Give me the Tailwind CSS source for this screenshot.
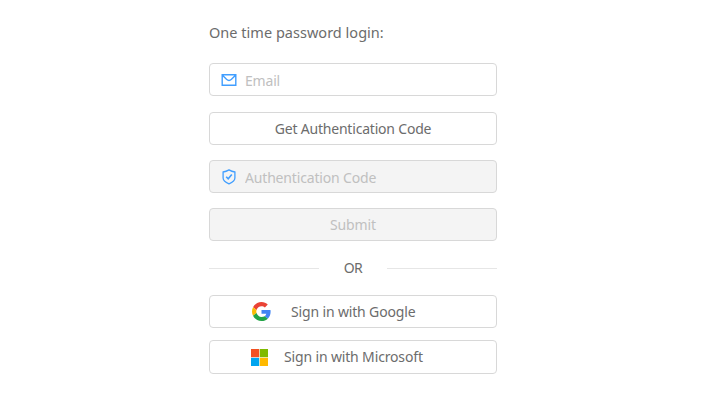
<!DOCTYPE html>
<html lang="en">
<head>
<meta charset="utf-8">
<title>Login</title>
<script src="https://cdn.jsdelivr.net/npm/@tailwindcss/browser@4"></script>
</head>
<body class="bg-white font-['Noto_Sans','Open_Sans',sans-serif] text-[14px] leading-5 text-[#6c6c6c]">
<main class="ml-[209px] flex w-[288px] flex-col pt-[22px]">
  <h1 class="h-5 whitespace-nowrap text-[14.5px] tracking-[0.02px]">One time password login:</h1>
  <label class="mt-[21px] flex h-[33px] items-center rounded-[4px] border border-[#d8d8d8] pl-[11px]">
    <svg class="mr-2 h-4 w-4 shrink-0" viewBox="0 0 16 16" fill="none" stroke="#409eff" stroke-width="1.4"><path d="M1.2 2.7h13.6v10.6H1.2zM1.2 2.9l4.3 4.4q2.5 2.2 5 0l4.3-4.4"/></svg>
    <input class="w-60 pt-0.5 tracking-[-0.2px] outline-none placeholder:text-[#c0c0c0]" type="email" placeholder="Email">
  </label>
  <button class="mt-4 h-[33px] rounded-[4px] border border-[#d8d8d8] tracking-[-0.2px]">Get Authentication Code</button>
  <label class="mt-[15px] flex h-[33px] items-center rounded-[4px] border border-[#d8d8d8] bg-[#f4f4f4] pl-[11px]">
    <svg class="mr-2 h-4 w-4 shrink-0" viewBox="0 0 16 16" fill="none" stroke="#409eff" stroke-width="1.3"><path d="M8 .9Q10.8 2.5 13.9 3v6.1Q13.9 12.4 8 14.8 2.1 12.4 2.1 9.1V3Q5.2 2.5 8 .9z"/><path d="m5.2 7.7 2 2 3.6-4.2" stroke-width="1.6"/></svg>
    <input class="w-60 pt-0.5 tracking-[-0.17px] outline-none placeholder:text-[#c0c0c0]" disabled placeholder="Authentication Code">
  </label>
  <button class="mt-[15px] h-[33px] rounded-[4px] border border-[#d8d8d8] bg-[#f4f4f4] tracking-[-0.1px] text-[#c0c0c0]" disabled>Submit</button>
  <div class="mt-[17px] flex h-5 items-center justify-between">
    <span class="h-px w-[110px] bg-[#e6e6e6]"></span>
    <span class="tracking-[-0.5px]">OR</span>
    <span class="h-px w-[110px] bg-[#e6e6e6]"></span>
  </div>
  <button class="mt-[17px] flex h-[33px] items-center whitespace-nowrap rounded-[4px] border border-[#d8d8d8] pl-[41.5px] tracking-[-0.15px]">
    <svg class="mr-[20.5px] h-[19px] w-[19px] shrink-0" viewBox="0 0 48 48"><path fill="#ea4335" d="M24 10.5c3.5 0 6.3 1.2 8.6 3.4l7.3-7.3C35.9 2.4 30.5 0 24 0 14.6 0 6.5 5.4 2.6 13.2l8.9 6.9c1.8-5.6 6.7-9.6 12.5-9.6z"/><path fill="#4285f4" d="M47 24.5c0-1.6-.1-3.1-.4-4.5H24v9.6h12.1c-.6 2.8-2 4.8-4.3 6.4l8.1 6.2c4.5-4.2 7.1-10.4 7.1-17.7z"/><path fill="#fbbc05" d="M11.5 27.9c-.4-1.2-.7-2.5-.7-3.9s.3-2.7.7-3.9l-8.9-6.9C.9 16.5 0 20.1 0 24s.9 7.5 2.6 10.8z"/><path fill="#22a447" d="M24 48c6.5 0 11.9-2.1 15.9-5.8L31.800 36c-2 1.300-4.600 2-7.800 2-5.800 0-10.700-4.200-12.500-10.100l-8.900 6.900C6.500 42.600 14.600 48 24 48z"/></svg>
    <span>Sign in with Google</span>
  </button>
  <button class="mt-3 flex h-[34px] items-center whitespace-nowrap rounded-[4px] border border-[#d8d8d8] pl-[41px] tracking-[-0.15px]">
    <svg class="mr-4 h-[17px] w-[17px] shrink-0" viewBox="0 0 17 17"><path fill="#f25022" d="M0 0h8.200v8.200H0z"/><path fill="#7fba00" d="M8.800 0H17v8.200H8.800z"/><path fill="#00a4ef" d="M0 8.800h8.200V17H0z"/><path fill="#ffb900" d="M8.800 8.800H17V17H8.800z"/></svg>
    <span>Sign in with Microsoft</span>
  </button>
</main>
</body>
</html>
